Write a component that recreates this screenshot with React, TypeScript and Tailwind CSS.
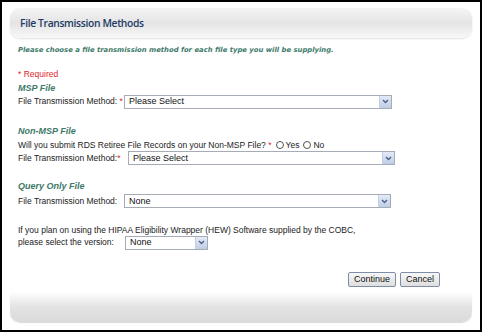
import React from 'react';

const label = "text-[8.5px] text-[#222]";

function FakeSelect({ value, width }: { value: string; width: string }) {
  return (
    <div className={`${width} h-[14px] flex items-center border border-[#a5acb5] bg-white`}>
      <span className="flex-1 pl-[4px] text-[9px] text-[#111] leading-none">{value}</span>
      <span className="w-[12px] h-[12px] flex items-center justify-center bg-gradient-to-b from-[#e3ebf8] to-[#bfcde6] border-l border-[#c4cfe0]">
        <svg width="7" height="5" viewBox="0 0 7 5">
          <path d="M1 1 L3.5 3.5 L6 1" fill="none" stroke="#4a5d80" strokeWidth="1.3" />
        </svg>
      </span>
    </div>
  );
}

function Radio({ text }: { text: string }) {
  return (
    <span className="inline-flex items-center gap-[2px] ml-[4px]">
      <span className="w-[8px] h-[8px] rounded-full border border-[#555] bg-white" />
      <span className={label}>{text}</span>
    </span>
  );
}

const sectionTitle = "text-[9px] italic font-bold text-[#3e7a6a]";

const App: React.FC = () => {
  return (
    <div
      className="w-[482px] h-[332px] border-2 border-black bg-white flex flex-col"
      style={{ fontFamily: '"Liberation Sans", Arial, sans-serif' }}
    >
      <div className="mx-[8px] mt-[6px] h-[30px] rounded-[10px] bg-gradient-to-b from-[#f5f5f5] via-[#e4e4e4] to-[#f8f8f8] shadow-[0_1px_2px_rgba(0,0,0,0.12)] flex items-center pl-[10px] pt-[2px]">
        <span
          className="text-[10.3px] font-semibold text-[#1d3b63] tracking-[-0.35px]"
          style={{ fontFamily: '"Open Sans", sans-serif' }}
        >
          File Transmission Methods
        </span>
      </div>

      <div className="flex-1 px-[16px] pt-[7px]">
        <p
          className="italic font-bold text-[#3e7a6a]"
          style={{ fontFamily: '"DejaVu Sans", Verdana, sans-serif', fontSize: '6.85px' }}
        >
          Please choose a file transmission method for each file type you will be supplying.
        </p>

        <p className="mt-[15px] text-[8.5px] text-[#e0262b] leading-none">* Required</p>

        <p className={`${sectionTitle} mt-[5px] leading-none`}>MSP File</p>
        <div className="flex items-center mt-[2px]">
          <span className={`${label} w-[106px]`}>
            File Transmission Method: <span className="text-[#e0262b]">*</span>
          </span>
          <FakeSelect value="Please Select" width="w-[268px]" />
        </div>

        <p className={`${sectionTitle} mt-[18px] leading-none`}>Non-MSP File</p>
        <div className="flex items-center mt-[5px] leading-none">
          <span className={label}>
            Will you submit RDS Retiree File Records on your Non-MSP File? <span className="text-[#e0262b]">*</span>
          </span>
          <Radio text="Yes" />
          <Radio text="No" />
        </div>
        <div className="flex items-center mt-[2px]">
          <span className={`${label} w-[110px]`}>
            File Transmission Method:<span className="text-[#e0262b]">*</span>
          </span>
          <FakeSelect value="Please Select" width="w-[267px]" />
        </div>

        <p className={`${sectionTitle} mt-[17px] leading-none`}>Query Only File</p>
        <div className="flex items-center mt-[3px]">
          <span className={`${label} w-[106px]`}>File Transmission Method:</span>
          <FakeSelect value="None" width="w-[267px]" />
        </div>

        <p className={`${label} mt-[18px] leading-none`}>
          If you plan on using the HIPAA Eligibility Wrapper (HEW) Software supplied by the COBC,
        </p>
        <div className="flex items-center mt-[1px]">
          <span className={`${label} w-[107px]`}>please select the version:</span>
          <FakeSelect value="None" width="w-[83px]" />
        </div>

        <div className="flex justify-end gap-[4px] mt-[22px] pr-[24px]">
          <button className="h-[15px] px-[5px] text-[9px] text-[#111] border border-[#7d8fa8] rounded-[2px] bg-gradient-to-b from-[#f8f8f8] to-[#dedede] leading-none">
            Continue
          </button>
          <button className="h-[15px] px-[5px] text-[9px] text-[#111] border border-[#7d8fa8] rounded-[2px] bg-gradient-to-b from-[#f8f8f8] to-[#dedede] leading-none">
            Cancel
          </button>
        </div>
      </div>

      <div className="mx-[8px] mb-[8px] h-[30px] rounded-b-[10px] bg-gradient-to-b from-[#ffffff] via-[#e3e3e3] to-[#dadada] shadow-[0_1px_1px_rgba(0,0,0,0.15)]" />
    </div>
  );
};

export default App;
